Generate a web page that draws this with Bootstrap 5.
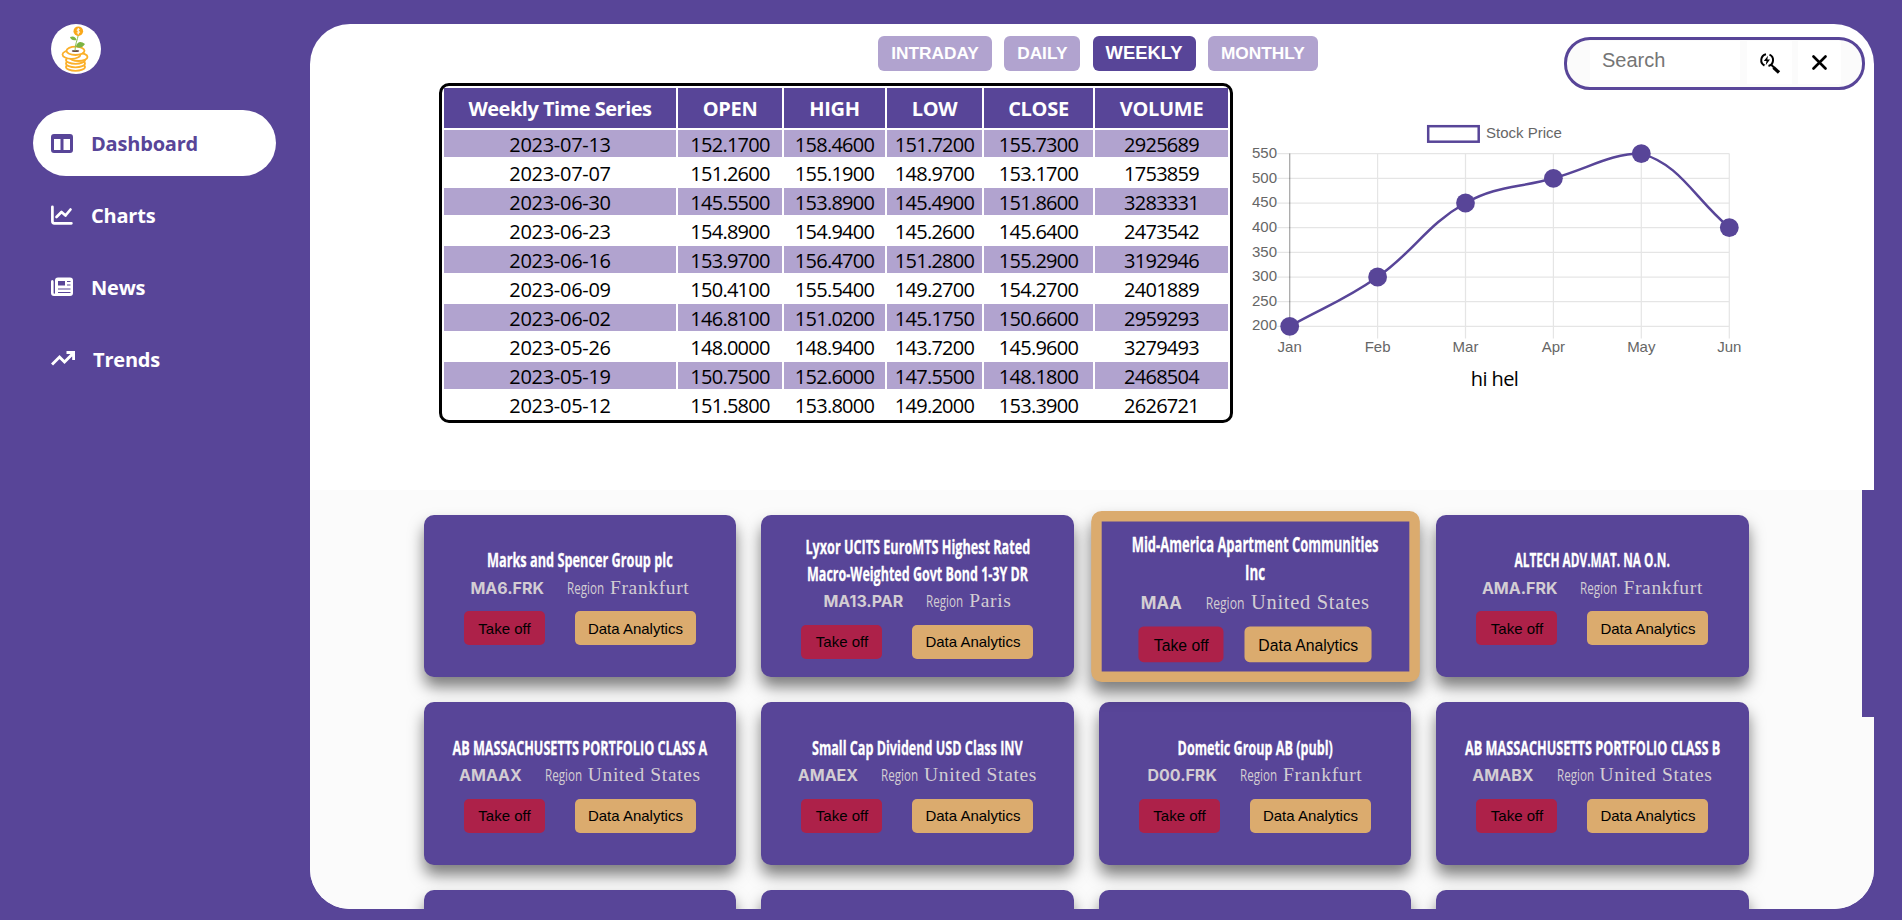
<!DOCTYPE html>
<html lang="en">
<head>
<meta charset="utf-8">
<title>Stock Dashboard</title>
<meta name="viewport" content="width=device-width, initial-scale=1">
<link href="https://cdn.jsdelivr.net/npm/bootstrap@5.3.0/dist/css/bootstrap.min.css" rel="stylesheet">
<style>
:root{--violet:#584598;--lilac:#b1a3cf;--gold:#dbab6e;--crimson:#ad2149}
body{background:var(--violet);font-family:"Open Sans","Noto Sans",sans-serif;color:#000;height:920px;overflow:hidden}
.side{width:310px;padding:24px 34px 0 33px}
.logo{width:50px;height:50px;margin-left:18px}
.menu{margin-top:36px;gap:6px}
.menu a{height:66px;border-radius:33px;padding:2px 0 0 18px;color:#fff;font-weight:700;font-size:20px;letter-spacing:-.2px;text-decoration:none}
.menu a.active{background:#fff;color:var(--violet)}
.menu svg{width:22px;height:20px;margin:-2px 18px 0 0;flex:none}
.menu svg.wide{width:24px}
.panel{width:1564px;height:885px;margin-top:24px;border-radius:40px;background:#fff;overflow:hidden}
.upper{height:466px;padding-left:129px}
.tabs-bar{padding:12px 0 0 439px;gap:12.3px}
.tab-btn{height:35px;border-radius:6px;background:var(--lilac);color:#fff;font:700 17.3px/34px "Liberation Sans",Arial,sans-serif;border:0;padding:0 0 2px;text-align:center}
.tab-btn.on{background:var(--violet);font-size:18.4px}
.series{border:3px solid #000;border-radius:10px;border-collapse:separate;border-spacing:2px;width:794px;height:340px;table-layout:fixed;margin-top:12px;font-size:20px;letter-spacing:-.75px;text-align:center}
.series th{height:40px;background:var(--violet);color:#fff;padding:2px 0 0;letter-spacing:-.3px;line-height:26px}
.series th:first-child{letter-spacing:-.5px}
.series td{height:27px;line-height:25px;padding:2px 0 0}
.series td:first-child{letter-spacing:-.3px}
.series tbody tr:nth-child(odd) td{background:var(--lilac)}
.chart-box{width:500px;margin-top:17px}
.chart-box svg{display:block}
.chart-note{font-size:20px;letter-spacing:-.6px;line-height:30px;padding-left:23px}
.finder{top:37px;right:37px;width:301px;height:53px;border:3px solid var(--violet);border-radius:26px;background:#fbfbfb;padding:1px 0 0 23px}
.finder input{width:150px;height:39px;border:0;background:#fff;padding:0 0 0 12px;font:20px "Liberation Sans",Arial,sans-serif;outline:0}
.finder input::placeholder{color:#757575;opacity:1}
.finder button{border:0;background:#fff;height:43px;padding:0}
.lower{height:419px;background:#fbfbfb;padding:24.6px 0 0 113.7px;overflow:hidden}
.stocks{display:grid;grid-template-columns:repeat(4,312.5px);grid-auto-rows:162.5px;gap:25px;width:1325px}
.stock{background:var(--violet);border-radius:10px;box-shadow:0 10px 15px rgba(0,0,0,.5);color:#fff}
.stock.hot{border:10px solid var(--gold);transform:scale(1.05)}
.ttl{font:700 20px/27px "Liberation Sans Narrow","Open Sans",sans-serif;white-space:nowrap}
.ttl span{display:inline-block;-webkit-text-stroke:.3px #fff}
.info{height:27px;color:#d3cdd3;line-height:27px;margin-top:1px}
.sym{font:700 16px "Inter","Liberation Sans",sans-serif;margin-right:23px}
.reg{width:37px;font:16px "Liberation Sans Narrow","Open Sans",sans-serif;margin-right:6px;white-space:nowrap}
.reg span{display:inline-block;transform-origin:0 50%}
.place{font:19.5px "Liberation Serif",serif;letter-spacing:.65px}
.acts{gap:30px;margin-top:10px}
.acts button{height:34px;border:0;border-radius:5px;font:15px "Liberation Sans",Arial,sans-serif;padding:0;color:#000;width:121px;background:var(--gold)}
.acts button.off{width:81px;background:var(--crimson)}
.hot .acts{gap:20px}
.thumb{top:490px;right:28px;width:12px;height:227px;background:var(--violet)}
</style>
</head>
<body>
<div class="d-flex position-relative">
  <aside class="side flex-shrink-0">
    <svg class="logo d-block" viewBox="0 0 50 50"><circle cx="25" cy="25" r="25" fill="#fff"/>
      <g fill="#fff" stroke="#fbb02a" stroke-width="1.800"><ellipse cx="24.500" cy="43" rx="9.500" ry="3.800"/><ellipse cx="24.500" cy="39.500" rx="9.500" ry="3.800"/><ellipse cx="24.500" cy="36" rx="9.500" ry="3.800"/><ellipse cx="27.500" cy="33" rx="9" ry="4"/><ellipse cx="20.500" cy="30.500" rx="9" ry="4.300"/><ellipse cx="24.500" cy="26.800" rx="9" ry="4.200"/></g>
      <ellipse cx="24.500" cy="27" rx="3.700" ry="1.100" fill="#6d4c41"/>
      <path d="M24 27C24 20 26.500 16 27.300 11" fill="none" stroke="#8cc152" stroke-width="1"/>
      <path d="M25.500 16c-4 1-6-1-6.500-3 3-1.500 6 0 6.500 3zM25 22.500c1-5 5-6 9-2.500-3 4-6 5-9 2.500z" fill="#7cb342"/>
      <circle cx="27.300" cy="7.200" r="4.800" fill="#faa819"/><path d="M28.700 5.400c-3-.8-3.600 1.300-1.400 1.700s1.600 2.600-1.500 1.700M27.300 4v6.500" fill="none" stroke="#fff" stroke-width=".9"/></svg>
    <nav class="menu d-flex flex-column">
      <a href="#" class="active d-flex align-items-center"><svg viewBox="0 0 22 20"><path fill="currentColor" fill-rule="evenodd" d="M3 1h16a3 3 0 0 1 3 3v13a3 3 0 0 1-3 3H3a3 3 0 0 1-3-3V4a3 3 0 0 1 3-3zM3 6v11h6.500V6zM12.500 6v11H19V6z"/></svg>Dashboard</a>
      <a href="#" class="d-flex align-items-center"><svg viewBox="0 0 22 20"><path fill="none" stroke="currentColor" stroke-width="2.700" stroke-linecap="round" stroke-linejoin="round" d="M1.400 1.800v14.500a2 2 0 0 0 2 2h17M5.500 12l5-5 4 3.500 5-6"/></svg>Charts</a>
      <a href="#" class="d-flex align-items-center"><svg viewBox="0 0 22 20"><path fill="currentColor" fill-rule="evenodd" d="M7 .500h12a3 3 0 0 1 3 3V16a3 3 0 0 1-3 3H3a3 3 0 0 1-3-3V4.500q0-1.500 1.300-1.500t1.300 1.500V16q0 .8.700.8t.7-.8V3.500a3 3 0 0 1 3-3zM7 4v4.500h7V4zM16 4v1h3.500V4zM16 7.500v1h3.500v-1zM7 11.500v1h12.500v-1zM7 15v1h12.500v-1z"/></svg>News</a>
      <a href="#" class="d-flex align-items-center"><svg class="wide" viewBox="0 0 24 20"><path fill="none" stroke="currentColor" stroke-width="3" d="M1 15.500 8.500 8l5 5L22 4.500M15.500 3.500h7.200v7.500"/></svg>Trends</a>
    </nav>
  </aside>
  <main class="panel">
    <section class="upper">
      <div class="tabs-bar d-flex">
        <button class="tab-btn" style="width:114px">INTRADAY</button>
        <button class="tab-btn" style="width:76px">DAILY</button>
        <button class="tab-btn on" style="width:103px">WEEKLY</button>
        <button class="tab-btn" style="width:110px">MONTHLY</button>
      </div>
      <div class="d-flex">
        <table class="series">
          <colgroup><col style="width:232px"><col style="width:104px"><col style="width:101px"><col style="width:95px"><col style="width:109px"><col></colgroup>
          <thead><tr><th>Weekly Time Series</th><th>OPEN</th><th>HIGH</th><th>LOW</th><th>CLOSE</th><th>VOLUME</th></tr></thead>
          <tbody>
          <tr><td>2023-07-13</td><td>152.1700</td><td>158.4600</td><td>151.7200</td><td>155.7300</td><td>2925689</td></tr>
          <tr><td>2023-07-07</td><td>151.2600</td><td>155.1900</td><td>148.9700</td><td>153.1700</td><td>1753859</td></tr>
          <tr><td>2023-06-30</td><td>145.5500</td><td>153.8900</td><td>145.4900</td><td>151.8600</td><td>3283331</td></tr>
          <tr><td>2023-06-23</td><td>154.8900</td><td>154.9400</td><td>145.2600</td><td>145.6400</td><td>2473542</td></tr>
          <tr><td>2023-06-16</td><td>153.9700</td><td>156.4700</td><td>151.2800</td><td>155.2900</td><td>3192946</td></tr>
          <tr><td>2023-06-09</td><td>150.4100</td><td>155.5400</td><td>149.2700</td><td>154.2700</td><td>2401889</td></tr>
          <tr><td>2023-06-02</td><td>146.8100</td><td>151.0200</td><td>145.1750</td><td>150.6600</td><td>2959293</td></tr>
          <tr><td>2023-05-26</td><td>148.0000</td><td>148.9400</td><td>143.7200</td><td>145.9600</td><td>3279493</td></tr>
          <tr><td>2023-05-19</td><td>150.7500</td><td>152.6000</td><td>147.5500</td><td>148.1800</td><td>2468504</td></tr>
          <tr><td>2023-05-12</td><td>151.5800</td><td>153.8000</td><td>149.2000</td><td>153.3900</td><td>2626721</td></tr>
          </tbody>
        </table>
        <div class="chart-box text-center">
          <svg width="510" height="276" viewBox="1233 88 510 276" font-family="Liberation Sans, Arial, sans-serif" font-size="15" fill="#666">
            <rect x="1428.200" y="126.200" width="50.500" height="15.500" fill="none" stroke="#584598" stroke-width="2.500"/>
            <text x="1486" y="138">Stock Price</text>
            <path stroke="#000" stroke-opacity=".1" stroke-width="1.250" d="M1277.200 153.600h452.100M1277.200 178.300h452.100M1277.200 203h452.100M1277.200 227.600h452.100M1277.200 252.300h452.100M1277.200 277h452.100M1277.200 301.600h452.100M1277.200 326.300h452.100M1377.600 153.600v185M1465.500 153.600v185M1553.400 153.600v185M1641.300 153.600v185M1729.300 153.600v185M1289.700 326v12.600M1289.700 326.300h439.600"/>
            <path stroke="#000" stroke-opacity=".35" stroke-width="1.250" d="M1289.700 153.600v172.700"/>
            <g text-anchor="end"><text x="1277" y="158">550</text><text x="1277" y="183">500</text><text x="1277" y="207">450</text><text x="1277" y="232">400</text><text x="1277" y="257">350</text><text x="1277" y="281">300</text><text x="1277" y="306">250</text><text x="1277" y="330">200</text></g>
            <g text-anchor="middle"><text x="1289.700" y="352">Jan</text><text x="1377.600" y="352">Feb</text><text x="1465.500" y="352">Mar</text><text x="1553.400" y="352">Apr</text><text x="1641.300" y="352">May</text><text x="1729.300" y="352">Jun</text></g>
            <path fill="none" stroke="#584598" stroke-width="2.500" d="M1289.700 326.300C1324.900 306.600 1344.700 300.100 1377.600 277C1415 250.700 1426.300 225 1465.500 203C1496.600 185.500 1518.200 188.200 1553.400 178.300C1588.600 168.400 1610.200 153.600 1641.300 153.600C1680.500 164.600 1694.100 198 1729.300 227.600"/>
            <g fill="#584598"><circle cx="1289.700" cy="326.300" r="9.400"/><circle cx="1377.600" cy="277" r="9.400"/><circle cx="1465.500" cy="203" r="9.400"/><circle cx="1553.400" cy="178.300" r="9.400"/><circle cx="1641.300" cy="153.600" r="9.400"/><circle cx="1729.300" cy="227.600" r="9.400"/></g>
          </svg>
          <div class="chart-note">hi hel</div>
        </div>
      </div>
    </section>
    <section class="lower"><div class="stocks" id="stocks"></div></section>
  </main>
  <form class="finder position-absolute d-flex">
    <input placeholder="Search" aria-label="Search">
    <button type="button" style="width:45px;margin-left:7px"><svg width="23" height="23" viewBox="0 0 23 23"><path d="M8 2.300A6 6 0 0 0 6.500 13.500M10.500 14a6 6 0 0 0 1-11.300" fill="none" stroke="#000" stroke-width="2"/><path d="M10 3.800 5.800 9h2.700l-.8 4.300L12 7.600H9.300z"/><path d="m13 12.500 3 3" stroke="#000" stroke-width="2"/><path d="m15.500 15.500 5.500 5" stroke="#000" stroke-width="3.300"/></svg></button>
    <button type="button" style="width:43px;margin-left:6px"><svg width="15" height="15" viewBox="0 0 15 15" style="margin-top:-4px"><path d="m1.500 1.500 12 12m0-12-12 12" stroke="#000" stroke-width="2.600" stroke-linecap="round"/></svg></button>
  </form>
  <div class="thumb position-absolute"></div>
</div>
<script src="https://cdn.jsdelivr.net/npm/bootstrap@5.3.0/dist/js/bootstrap.bundle.min.js"></script>
<script>
// title lines are [text, width in px]
const stocks = [
  {t:[["Marks and Spencer Group plc",186]],s:"MA6.FRK",r:"Frankfurt"},
  {t:[["Lyxor UCITS EuroMTS Highest Rated",225],["Macro-Weighted Govt Bond 1-3Y DR",221]],s:"MA13.PAR",r:"Paris"},
  {t:[["Mid-America Apartment Communities",235],["Inc",19]],s:"MAA",r:"United States",hot:true},
  {t:[["ALTECH ADV.MAT. NA O.N.",155]],s:"AMA.FRK",r:"Frankfurt"},
  {t:[["AB MASSACHUSETTS PORTFOLIO CLASS A",255]],s:"AMAAX",r:"United States"},
  {t:[["Small Cap Dividend USD Class INV",211]],s:"AMAEX",r:"United States"},
  {t:[["Dometic Group AB (publ)",155]],s:"D00.FRK",r:"Frankfurt"},
  {t:[["AB MASSACHUSETTS PORTFOLIO CLASS B",255]],s:"AMABX",r:"United States"},
  null,null,null,null
];
document.getElementById("stocks").innerHTML = stocks.map(c => !c ? '<div class="stock"></div>' :
 `<div class="stock d-flex flex-column align-items-center justify-content-center${c.hot?" hot":""}">
  ${c.t.map(l=>`<div class="ttl"><span data-w="${l[1]}">${l[0]}</span></div>`).join("")}
  <div class="info d-flex align-items-center"><span class="sym">${c.s}</span><span class="reg"><span data-w="37">Region</span></span><span class="place">${c.r}</span></div>
  <div class="acts d-flex"><button class="off">Take off</button><button>Data Analytics</button></div></div>`).join("");
document.querySelectorAll("[data-w]").forEach(e => { e.style.transform = `scaleX(${e.dataset.w / e.offsetWidth})`; });
</script>
</body>
</html>
